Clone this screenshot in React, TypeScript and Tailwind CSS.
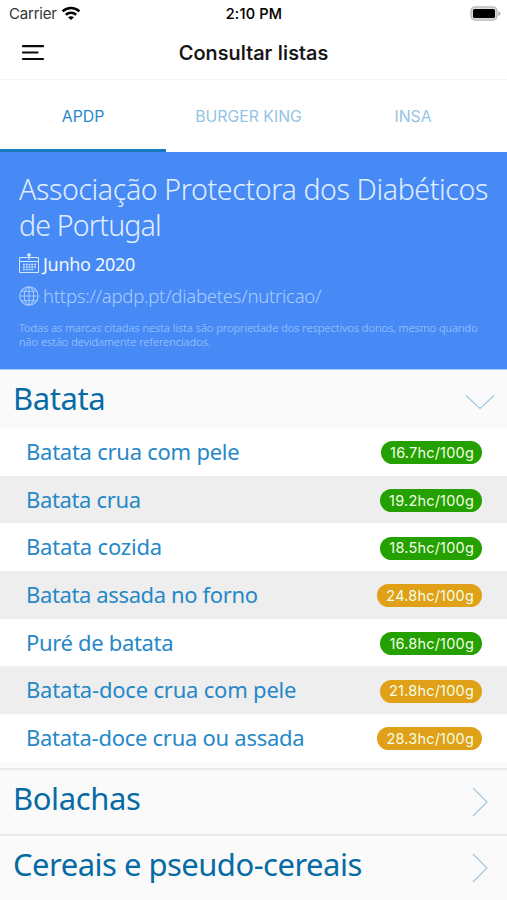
const humanist = "font-['Noto_Sans','Open_Sans',sans-serif]";

type Food = { name: string; value: string; tone: "low" | "mid"; spacing: string };

const foods: Food[] = [
  { name: "Batata crua com pele", value: "16.7hc/100g", tone: "low", spacing: "tracking-[-0.25px]" },
  { name: "Batata crua", value: "19.2hc/100g", tone: "low", spacing: "tracking-[-0.35px]" },
  { name: "Batata cozida", value: "18.5hc/100g", tone: "low", spacing: "tracking-[-0.2px]" },
  { name: "Batata assada no forno", value: "24.8hc/100g", tone: "mid", spacing: "tracking-[-0.37px]" },
  { name: "Puré de batata", value: "16.8hc/100g", tone: "low", spacing: "tracking-[-0.33px]" },
  { name: "Batata-doce crua com pele", value: "21.8hc/100g", tone: "mid", spacing: "tracking-[-0.2px]" },
  { name: "Batata-doce crua ou assada", value: "28.3hc/100g", tone: "mid", spacing: "tracking-[-0.27px]" },
];

function StatusBar() {
  return (
    <div className="grid h-[27px] grid-cols-3 items-center pl-[9px] pr-[6px] text-black">
      <div className="flex items-center gap-[6px]">
        <span className="text-[15px] leading-[27px] tracking-[-0.2px] text-[#333]">Carrier</span>
        <svg className="-ml-[2px] -mt-px" width="20" height="15" viewBox="0 0 20 15" fill="none" stroke="#000" strokeWidth="2.500">
          <path d="M1.600 5.300C6.400.9 13.600.9 18.400 5.300" />
          <path d="M4.800 8.800c3-2.700 7.400-2.700 10.400 0" />
          <path d="M10 14 7.100 11.200c1.700-1.400 4.100-1.400 5.800 0Z" fill="#000" stroke="none" />
        </svg>
      </div>
      <span className="-ml-[2px] text-center font-['Inter',sans-serif] text-[14.500px] font-medium leading-[27px] tracking-[0.2px] [-webkit-text-stroke:0.100px_#000]">2:10 PM</span>
      <svg className="justify-self-end" width="31" height="15" viewBox="0 0 31 15">
        <rect x="1" y="1" width="26" height="13" rx="4" fill="#ddd" stroke="#bdbdbd" strokeWidth="1.500" />
        <rect x="3" y="3" width="22" height="9" rx="1.500" fill="#000" />
        <path d="M28.500 5v5q2-1 2-2.500t-2-2.500Z" fill="#aaa" />
      </svg>
    </div>
  );
}

function Header() {
  return (
    <header className="flex h-[53px] items-center border-b border-[#f4f4f4]">
      <svg className="ml-[21px]" width="24" height="18" viewBox="0 0 24 18" stroke="#0b0b0b" strokeWidth="2.200" strokeLinecap="round">
        <path d="M2 2.200h20M2 8.500h14.500M2 15h20" />
      </svg>
      <h1 className="mr-[45px] flex-1 text-center font-['Inter',sans-serif] text-[20px] font-medium tracking-[0.1px] text-[#111] [-webkit-text-stroke:0.200px_#111]">Consultar listas</h1>
    </header>
  );
}

function Tabs() {
  return (
    <nav className="flex h-[72px] text-[15.800px] text-[#93c4e4]">
      <div className="flex w-[166px] items-center justify-center border-b-[3px] border-[#1879bd] pt-[5px] text-[#2888c9]">APDP</div>
      <div className="flex w-[165px] items-center justify-center pt-[2px]">BURGER KING</div>
      <div className="flex w-[164px] items-center justify-center pt-[2px]">INSA</div>
    </nav>
  );
}

function CalendarIcon() {
  return (
    <svg className="-mt-[2px]" width="20" height="20" viewBox="0 0 20 20" fill="none" stroke="#d5e7ff" strokeWidth="1">
      <path d="M.5 4.500h19v15H.5ZM.5 8.500h19M10 3v4" />
      <circle cx="10" cy="2" r="1.400" fill="#d5e7ff" />
      <path d="M4 11.500h13M4 14h13M4 16.500h11" strokeWidth="1.600" strokeDasharray="1.800 1" />
    </svg>
  );
}

function GlobeIcon() {
  return (
    <svg width="20" height="20" viewBox="0 0 20 20" fill="none" stroke="#a5caff" strokeWidth="1.100">
      <circle cx="10" cy="10" r="9.200" />
      <ellipse cx="10" cy="10" rx="4.700" ry="9.200" />
      <path d="M10 .8v18.400M.8 10h18.400M2.500 5.200h15M2.500 14.800h15" />
    </svg>
  );
}

function Intro() {
  return (
    <section className={`${humanist} h-[218px] border-b border-[#a9cdfd] bg-[#488af5] px-[19px] pt-[19px]`}>
      <h2 className="whitespace-nowrap text-[28.500px] font-light leading-[36px] text-[#e0efff]">
        <span className="block tracking-[-0.37px]">Associação Protectora dos Diabéticos</span>
        <span className="block tracking-[-0.8px]">de Portugal</span>
      </h2>
      <div className="mt-[5px] flex h-[32px] items-center gap-[4px]">
        <CalendarIcon />
        <span className="whitespace-nowrap text-[18px] tracking-[-0.3px] text-[#f0f7ff]">Junho 2020</span>
      </div>
      <div className="flex h-[31px] items-center gap-[4px]">
        <GlobeIcon />
        <span className="whitespace-nowrap text-[18.500px] font-light tracking-[-0.24px] text-[#a8ccff]">https://apdp.pt/diabetes/nutricao/</span>
      </div>
      <p className="mt-[10px] whitespace-nowrap text-[11px] font-light leading-[13.600px] text-[#a4caff]">
        <span className="block tracking-[0.02px]">Todas as marcas citadas nesta lista são propriedade dos respectivos donos, mesmo quando</span>
        <span className="block tracking-[0.02px]">não estão devidamente referenciados.</span>
      </p>
    </section>
  );
}

function Chevron({ open = false }: { open?: boolean }) {
  return open ? (
    <svg width="30" height="16" viewBox="0 0 30 16" fill="none" stroke="#a2c8df" strokeWidth="1.200">
      <path d="m1 1.500 14 13 14-13" />
    </svg>
  ) : (
    <svg className="mr-[7px]" width="16" height="30" viewBox="0 0 16 30" fill="none" stroke="#a2c8df" strokeWidth="1.200">
      <path d="m1 1 14 14L1 29" />
    </svg>
  );
}

function FoodRow({ food }: { food: Food }) {
  return (
    <li className="flex h-[47.700px] items-center justify-between pl-[26px] pr-[25px] odd:bg-white even:bg-[#eee]">
      <span className={`${humanist} ${food.spacing} whitespace-nowrap pb-[2px] text-[22px] leading-[44px] text-[#2688c7]`}>{food.name}</span>
      <span
        className={`mt-[2px] flex h-[23px] items-center rounded-full pl-[9px] pr-[8px] text-[14.500px] tracking-[0.2px] text-[#f2ffe8] ${food.tone === "low" ? "bg-[#24a000]" : "bg-[#e0a018]"}`}
      >
        {food.value}
      </span>
    </li>
  );
}

const groupTitle = "whitespace-nowrap text-[31px] leading-[56px] text-[#066ba5]";

export default function App() {
  return (
    <main className="h-[900px] w-[507px] overflow-hidden bg-[#fafafa] font-['Inter','Liberation_Sans',sans-serif]">
      <div className="bg-white">
        <StatusBar />
        <Header />
        <Tabs />
      </div>
      <Intro />
      <div className="flex h-[58px] items-center justify-between pl-[13px] pr-[12px]">
        <h3 className={`${humanist} ${groupTitle} pb-[2px] tracking-[-0.4px]`}>Batata</h3>
        <div className="pt-[6px]"><Chevron open /></div>
      </div>
      <ul>
        {foods.map((food) => (
          <FoodRow key={food.name} food={food} />
        ))}
      </ul>
      <div className="mt-[6px] flex h-[66px] items-center justify-between border-t-2 border-[#e9e9e9] pl-[13px] pr-[12px]">
        <h3 className={`${humanist} ${groupTitle} pb-[7px] tracking-[-0.4px]`}>Bolachas</h3>
        <Chevron />
      </div>
      <div className="flex h-[66px] items-center justify-between border-t-2 border-[#e9e9e9] pl-[13px] pr-[12px]">
        <h3 className={`${humanist} ${groupTitle} pb-[7px] tracking-[-0.52px]`}>Cereais e pseudo-cereais</h3>
        <Chevron />
      </div>
    </main>
  );
}
